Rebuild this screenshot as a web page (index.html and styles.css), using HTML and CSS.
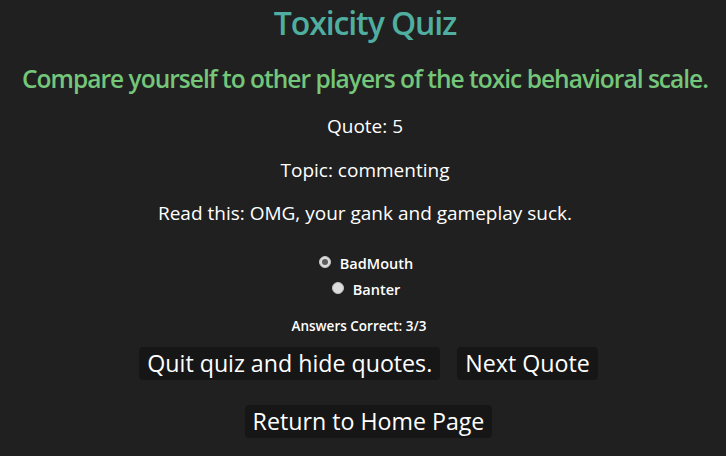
FILE: index.html
```html
<!DOCTYPE html>
<html>
<head>
<meta charset="utf-8">
<link rel="stylesheet" href="styles.css">
</head>
<body>
<main class="page">
  <h1 class="title">Toxicity Quiz</h1>
  <h2 class="subtitle">Compare yourself to other players of the toxic behavioral scale.</h2>
  <p class="line">Quote: 5</p>
  <p class="line">Topic: commenting</p>
  <p class="line">Read this: OMG, your gank and gameplay suck.</p>
  <div class="options">
    <label class="option"><span class="radio checked"></span>BadMouth</label>
    <label class="option"><span class="radio"></span>Banter</label>
  </div>
  <p class="score">Answers Correct: 3/3</p>
  <div class="buttons">
    <button class="btn">Quit quiz and hide quotes.</button>
    <button class="btn">Next Quote</button>
  </div>
  <div class="buttons second">
    <button class="btn">Return to Home Page</button>
  </div>
</main>
</body>
</html>
```

FILE: styles.css
```css
html, body {
  margin: 0;
  padding: 0;
  background: #202020;
}
.page {
  display: flex;
  flex-direction: column;
  align-items: center;
  font-family: "Open Sans", "Noto Sans", sans-serif;
  color: #ffffff;
}
.title {
  margin: 3px 0 0 4px;
  font-family: "Open Sans", sans-serif;
  font-weight: 600;
  font-size: 32px;
  line-height: 40px;
  letter-spacing: -1.1px;
  color: #4fae9f;
  white-space: nowrap;
}
.subtitle {
  margin: 21px 0 0 4px;
  font-family: "Open Sans", sans-serif;
  font-weight: 600;
  font-size: 24.5px;
  line-height: 30px;
  letter-spacing: -0.98px;
  color: #74c67a;
  white-space: nowrap;
}
.line {
  margin: 20px 0 0 4px;
  font-size: 19px;
  line-height: 24px;
  font-weight: 500;
  white-space: nowrap;
}
.line + .line { margin-top: 19.5px; }
.options {
  margin-top: 29px;
  margin-left: 6px;
  display: flex;
  flex-direction: column;
  align-items: center;
  gap: 6px;
}
.option {
  display: flex;
  align-items: flex-start;
  gap: 9px;
  font-size: 14.5px;
  font-weight: 600;
  line-height: 20px;
}
.radio {
  margin-top: 2px;
  width: 12px;
  height: 12px;
  border-radius: 50%;
  background: #dcdcdc;
  border: 1px solid #c4c4c4;
  box-sizing: border-box;
  position: relative;
}
.radio.checked::after {
  content: "";
  position: absolute;
  left: 2px;
  top: 2px;
  width: 6px;
  height: 6px;
  border-radius: 50%;
  background: #5c5c5c;
}
.score {
  margin: 17px 0 0 -8px;
  font-size: 13.5px;
  font-weight: 600;
  line-height: 18px;
}
.buttons {
  margin-top: 12px;
  margin-left: 11px;
  display: flex;
  gap: 17px;
  justify-content: center;
}
.buttons.second { margin-top: 25px; }
.btn {
  font-family: "Open Sans", "Noto Sans", sans-serif;
  font-size: 23.2px;
  line-height: 33px;
  height: 33px;
  padding: 0 8px;
  background: #161616;
  color: #ffffff;
  border: none;
  border-radius: 4px;
}
```
